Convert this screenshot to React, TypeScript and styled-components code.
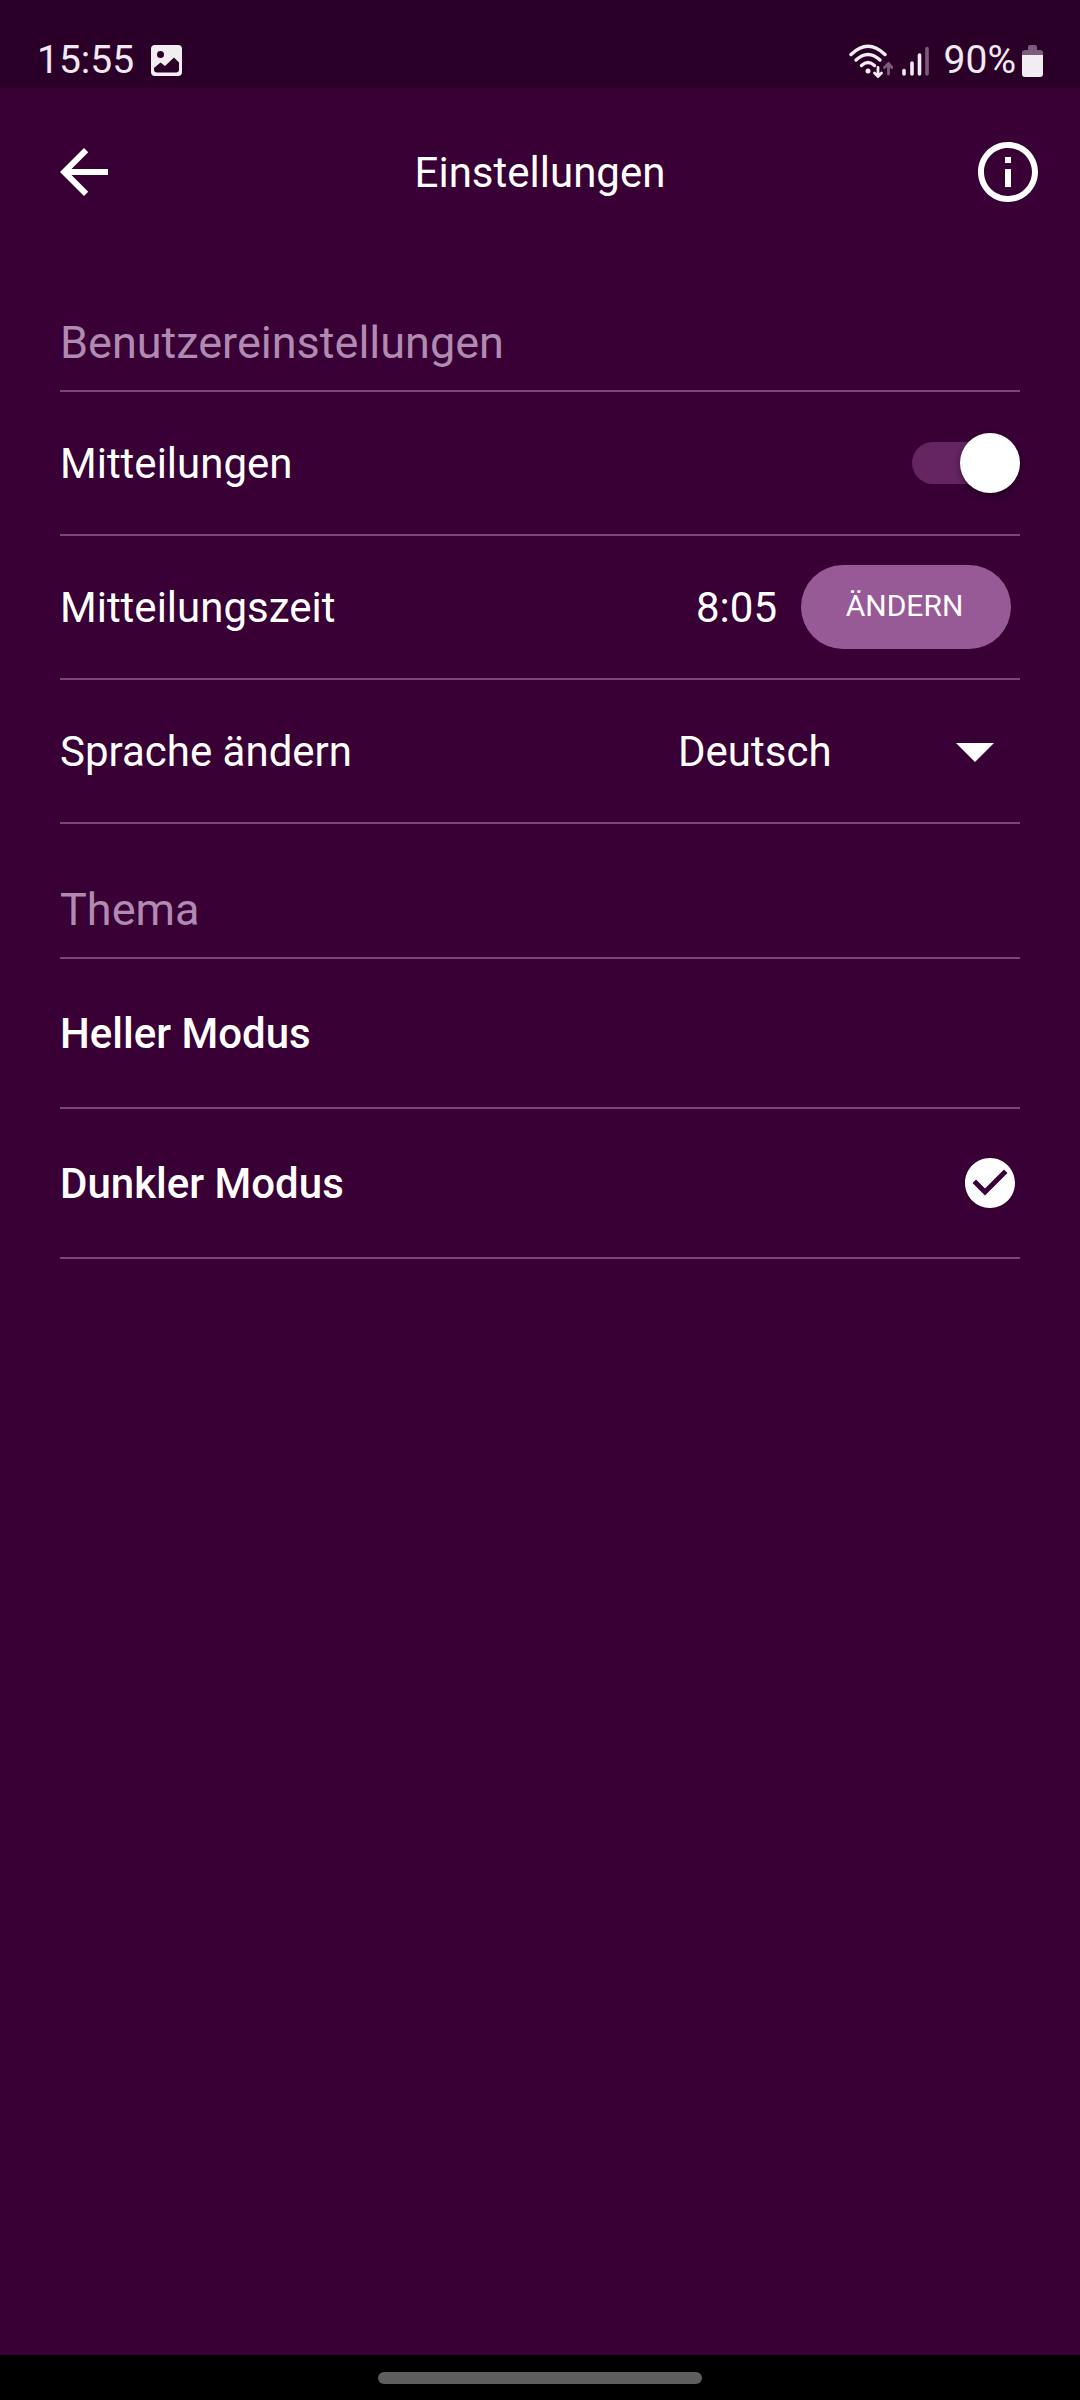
import React, { useState } from "react";
import styled, { createGlobalStyle } from "styled-components";

const GlobalStyle = createGlobalStyle`
  *, *::before, *::after { box-sizing: border-box; }
  body {
    margin: 0;
    background: #380035;
    color: #ffffff;
    font-family: Roboto, "Noto Sans", sans-serif;
    font-size: 42px;
    line-height: 49px;
  }
`;

const Screen = styled.div`
  display: flex;
  flex-direction: column;
  min-height: 100vh;
  background: #380035;
`;

const StatusBar = styled.div`
  display: flex;
  align-items: center;
  justify-content: space-between;
  height: 88px;
  padding: 33px 37px 0;
  background: #2a0028;
  color: #f1e9f1;
  font-size: 39px;
`;

const StatusGroup = styled.div<{ $gap: number }>`
  display: flex;
  align-items: center;
  gap: ${(p) => p.$gap}px;
`;

const Icon = styled.svg`
  display: block;
  flex: none;
`;

const AppBar = styled.header`
  display: grid;
  grid-template-columns: 84px 1fr 84px;
  align-items: center;
  height: 168px;
  padding: 0 36px;
`;

const IconButton = styled.button`
  justify-self: end;
  width: 72px;
  height: 72px;
  padding: 0;
  border: 0;
  background: none;
  color: inherit;
  cursor: pointer;
`;

const Title = styled.h1`
  margin: 0;
  font-size: 42px;
  font-weight: 400;
  text-align: center;
`;

const Content = styled.main`
  flex: 1;
  padding: 1px 60px 0;
`;

const SectionTitle = styled.h2`
  display: flex;
  align-items: flex-end;
  height: 135px;
  margin: 0;
  padding-bottom: 20px;
  border-bottom: 2px solid #79467a;
  color: #b08ab1;
  font-size: 45px;
  font-weight: 400;
  line-height: 54px;
`;

const Row = styled.div`
  display: flex;
  align-items: center;
  justify-content: space-between;
  height: 144px;
  border-bottom: 2px solid #79467a;
`;

const ThemeList = styled.div``;

const ThemeRow = styled.label`
  display: flex;
  align-items: center;
  justify-content: space-between;
  height: 150px;
  border-bottom: 2px solid #79467a;
  font-weight: 500;
  cursor: pointer;
`;

const HiddenRadio = styled.input`
  position: absolute;
  width: 1px;
  height: 1px;
  margin: 0;
  opacity: 0;
`;

const Switch = styled.input`
  appearance: none;
  position: relative;
  width: 108px;
  height: 60px;
  margin: 0;
  cursor: pointer;

  &::before {
    content: "";
    position: absolute;
    inset: 9px 6px 9px 0;
    border-radius: 21px;
    background: #652563;
  }

  &::after {
    content: "";
    position: absolute;
    top: 0;
    left: 0;
    width: 60px;
    height: 60px;
    border-radius: 50%;
    background: #ffffff;
    box-shadow: 0 3px 7px rgba(0, 0, 0, 0.4);
  }

  &:checked::after {
    left: 48px;
  }
`;

const TimeGroup = styled.div`
  display: flex;
  align-items: center;
  gap: 24px;
  padding-right: 9px;
`;

const PillButton = styled.button`
  width: 210px;
  height: 84px;
  padding: 0 3px 3px 0;
  border: 0;
  border-radius: 42px;
  background: #985a97;
  color: #ffffff;
  font-family: inherit;
  font-size: 30px;
  cursor: pointer;
`;

const SelectBox = styled.div`
  display: grid;
  align-items: center;
  width: 342px;

  > * {
    grid-area: 1 / 1;
  }

  > svg {
    justify-self: end;
    margin-right: 26px;
    pointer-events: none;
  }
`;

const Select = styled.select`
  appearance: none;
  width: 100%;
  height: 72px;
  padding: 0;
  border: 0;
  background: transparent;
  color: #ffffff;
  font-family: inherit;
  font-size: 42px;
  cursor: pointer;

  option {
    background: #380035;
  }
`;

const NavigationBar = styled.div`
  display: flex;
  align-items: center;
  justify-content: center;
  height: 45px;
  background: #000000;
`;

const HomeHandle = styled.div`
  width: 324px;
  height: 12px;
  border-radius: 6px;
  background: #5e5e5e;
`;

const PictureIcon = () => (
  <Icon width="31" height="31" viewBox="0 0 31 31" aria-hidden="true">
    <path
      fill="#f1edf1"
      fillRule="evenodd"
      d="M4 0h23a4 4 0 0 1 4 4v23a4 4 0 0 1-4 4H4a4 4 0 0 1-4-4V4a4 4 0 0 1 4-4zM9.500 6a3.500 3.500 0 1 0 0 7a3.500 3.500 0 0 0 0-7zM3 24.500V23l6.500-5.500 4.500 3.500 9-8.500 5 5V24.500q0 3-3 3H6q-3 0-3-3z"
    />
  </Icon>
);

const WifiIcon = () => (
  <Icon width="44" height="34" viewBox="0 0 44 34" fill="none" strokeLinecap="round" aria-hidden="true">
    <g stroke="#f1edf1" strokeWidth="3.400">
      <path d="M2 10.500Q19 -6 36 10.500" />
      <path d="M7 16Q19 5 31 16" />
      <path d="M12.500 21.500Q19 15.500 25.500 21.500" />
      <path d="M29 23.500V32M25.500 29L29 32.500 32.500 29" strokeWidth="2.800" />
    </g>
    <circle cx="19" cy="27" r="2.500" fill="#f1edf1" />
    <path d="M39.500 30V20M35.500 23.500L39.500 19.500 43 23.500" stroke="#7b5c7a" strokeWidth="2.800" />
  </Icon>
);

const SignalIcon = () => (
  <Icon width="28" height="30" viewBox="0 0 28 30" strokeWidth="3.600" strokeLinecap="round" aria-hidden="true">
    <g stroke="#f1edf1">
      <path d="M2 24.500V28" />
      <path d="M10 17V28" />
      <path d="M17.500 9V28" />
    </g>
    <path d="M25 2.500V28" stroke="#7b5c7a" />
  </Icon>
);

const BatteryIcon = () => (
  <Icon width="21" height="32" viewBox="0 0 21 32" aria-hidden="true">
    <path fill="#7b5c7a" d="M0 10V7.500Q0 5 3 5H6V2Q6 0 8 0H13Q15 0 15 2V5H18Q21 5 21 7.500V10z" />
    <path fill="#f1edf1" d="M0 10H21V29Q21 32 18 32H3Q0 32 0 29z" />
  </Icon>
);

const BackIcon = () => (
  <Icon width="72" height="72" viewBox="0 0 24 24" fill="currentColor" aria-hidden="true">
    <path d="M20 11H7.830l5.590-5.590L12 4l-8 8 8 8 1.410-1.410L7.830 13H20v-2z" />
  </Icon>
);

const InfoIcon = () => (
  <Icon width="72" height="72" viewBox="0 0 24 24" fill="currentColor" aria-hidden="true">
    <path d="M11 7h2v2h-2zm0 4h2v6h-2zm1-9C6.480 2 2 6.480 2 12s4.480 10 10 10 10-4.480 10-10S17.520 2 12 2zm0 18c-4.410 0-8-3.590-8-8s3.590-8 8-8 8 3.590 8 8-3.590 8-8 8z" />
  </Icon>
);

const CheckIcon = () => (
  <Icon width="60" height="60" viewBox="0 0 24 24" fill="currentColor" aria-hidden="true">
    <path d="M12 2C6.480 2 2 6.480 2 12s4.480 10 10 10 10-4.480 10-10S17.520 2 12 2zm-2 15l-5-5 1.410-1.410L10 14.170l7.590-7.590L19 8l-9 9z" />
  </Icon>
);

const themes = [
  { id: "light", label: "Heller Modus" },
  { id: "dark", label: "Dunkler Modus" },
];

export default function App() {
  const [notify, setNotify] = useState(true);
  const [theme, setTheme] = useState("dark");

  return (
    <>
      <GlobalStyle />
      <Screen>
        <StatusBar>
          <StatusGroup $gap={17}>
            <span>15:55</span>
            <PictureIcon />
          </StatusGroup>
          <StatusGroup $gap={14}>
            <StatusGroup $gap={9}>
              <WifiIcon />
              <SignalIcon />
            </StatusGroup>
            <StatusGroup $gap={6}>
              <span>90%</span>
              <BatteryIcon />
            </StatusGroup>
          </StatusGroup>
        </StatusBar>

        <AppBar>
          <IconButton type="button" aria-label="Zurück">
            <BackIcon />
          </IconButton>
          <Title>Einstellungen</Title>
          <IconButton type="button" aria-label="Info">
            <InfoIcon />
          </IconButton>
        </AppBar>

        <Content>
          <SectionTitle>Benutzereinstellungen</SectionTitle>
          <Row>
            <label htmlFor="notify">Mitteilungen</label>
            <Switch
              id="notify"
              type="checkbox"
              role="switch"
              checked={notify}
              onChange={(e) => setNotify(e.target.checked)}
            />
          </Row>
          <Row>
            <span>Mitteilungszeit</span>
            <TimeGroup>
              <span>8:05</span>
              <PillButton type="button">ÄNDERN</PillButton>
            </TimeGroup>
          </Row>
          <Row>
            <label htmlFor="language">Sprache ändern</label>
            <SelectBox>
              <Select id="language" defaultValue="de">
                <option value="de">Deutsch</option>
              </Select>
              <Icon width="38" height="22" viewBox="0 0 38 22" fill="currentColor" aria-hidden="true">
                <path d="M0 3H38L19 22z" />
              </Icon>
            </SelectBox>
          </Row>

          <SectionTitle id="theme-title">Thema</SectionTitle>
          <ThemeList role="radiogroup" aria-labelledby="theme-title">
            {themes.map((t) => (
              <ThemeRow key={t.id}>
                <HiddenRadio
                  type="radio"
                  name="theme"
                  value={t.id}
                  checked={theme === t.id}
                  onChange={() => setTheme(t.id)}
                />
                <span>{t.label}</span>
                {theme === t.id && <CheckIcon />}
              </ThemeRow>
            ))}
          </ThemeList>
        </Content>

        <NavigationBar>
          <HomeHandle />
        </NavigationBar>
      </Screen>
    </>
  );
}
